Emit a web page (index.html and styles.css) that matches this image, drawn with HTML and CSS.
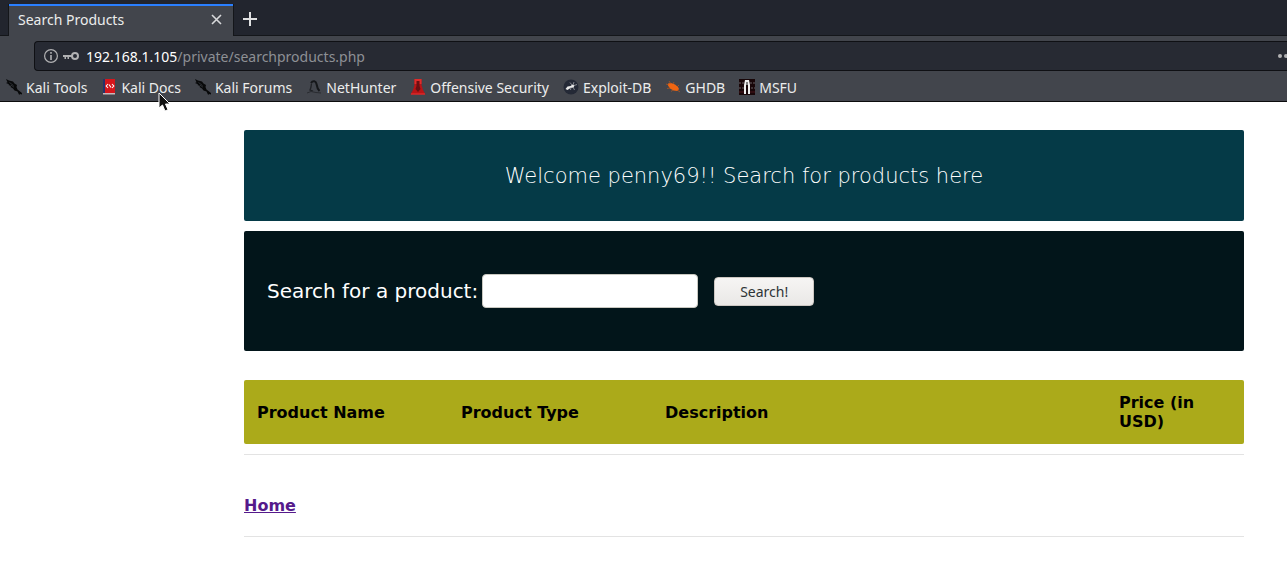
FILE: index.html
```html
<!DOCTYPE html>
<html lang="en">
<head>
<meta charset="utf-8">
<title>Search Products</title>
<link rel="stylesheet" href="styles.css">
</head>
<body>
<svg class="sprite" aria-hidden="true">
  <symbol id="dragon" viewBox="0 0 16 16">
    <path d="M0 0l3 1.500 4 1 1.500 2 2.500 1.500-.5 2 1 2.500 4.500 3.500v1.500l-2-.5-.8 1-1.700-3.500-3-1-1.500-2-2.500-1.500.5-1-2.500-1 .5-.8L0 4l1.500-.8z" fill="#08090a"/>
    <path d="M3.500 3.500l4 3M5 6.200l3 2" stroke="#3a3d43" stroke-width=".7"/>
  </symbol>
</svg>
<header class="browser">
  <div class="tabs">
    <div class="tab">
      <span>Search Products</span>
      <button class="icon-button" aria-label="Close tab"><svg width="11" height="11" viewBox="0 0 11 11"><path d="M1 1l9 9M10 1l-9 9" stroke="#d8d9db" stroke-width="1.600"/></svg></button>
    </div>
    <button class="icon-button new-tab" aria-label="New tab"><svg width="14" height="14" viewBox="0 0 14 14"><path d="M7 0v14M0 7h14" stroke="#e0e1e2" stroke-width="2"/></svg></button>
  </div>
  <div class="toolbar">
    <div class="address">
      <svg width="14" height="14" viewBox="0 0 14 14"><circle cx="7" cy="7" r="6.400" fill="none" stroke="#b1b1b3" stroke-width="1.200"/><path d="M6.200 3h1.600v1.700H6.200zM6.200 6h1.600v5H6.200z" fill="#b1b1b3"/></svg>
      <svg width="16" height="10" viewBox="0 0 16 10"><circle cx="12" cy="5" r="3" fill="none" stroke="#b1b1b3" stroke-width="2"/><path d="M0 4h9v2H6v2H4.500V6H3v2H1.500V6H0z" fill="#b1b1b3"/></svg>
      <div class="url"><b>192.168.1.105</b>/private/searchproducts.php</div>
      <svg class="more" width="10" height="4" viewBox="0 0 10 4"><circle cx="2" cy="2" r="2" fill="#b1b1b3"/><circle cx="8" cy="2" r="2" fill="#b1b1b3"/></svg>
    </div>
  </div>
  <nav class="bookmarks">
    <a href="#"><svg width="16" height="16"><use href="#dragon"/></svg>Kali Tools</a>
    <a href="#"><svg width="16" height="16" viewBox="0 0 16 16"><path d="M2 0h2v14H2z" fill="#26336b"/><path d="M4 0h10v14H4z" fill="#d5161c"/><path d="M2 14h12v1.500H2z" fill="#c8b8bb"/><path d="M7 5L5.200 7 7 9M11 5l1.800 2L11 9M8 5.500l2 3" fill="none" stroke="#fff" stroke-width="1.100"/></svg>Kali Docs</a>
    <a href="#"><svg width="16" height="16"><use href="#dragon"/></svg>Kali Forums</a>
    <a href="#"><svg width="16" height="16" viewBox="0 0 16 16"><path d="M5 4C7 1 10 2 10.500 5c.5 3 1 5 3 7" fill="none" stroke="#15171a" stroke-width="2"/><path d="M5.500 4.500L5 8l-1 3 3 1" fill="none" stroke="#202226" stroke-width="1.300"/><path d="M1 14l4-1.500 5 1 5 .5" fill="none" stroke="#292b30"/></svg>NetHunter</a>
    <a href="#"><svg width="16" height="16" viewBox="0 0 16 16"><path d="M4.500 0h7v6l1.500 5 2.500 4.500H.5L3 11l1.500-5z" fill="#b91416"/><path d="M4.500 0h7v5h-7z" fill="#e02b2a"/><path d="M6.500 2h3v5l1 3-2.500 3-2.500-3 1-3z" fill="#691013"/><path d="M1 15h14" stroke="#ec3030"/></svg>Offensive Security</a>
    <a href="#"><svg width="16" height="16" viewBox="0 0 16 16"><circle cx="8" cy="8" r="7.500" fill="#242936"/><path d="M2.500 10l2-2.500 3-.5 2-1.500 2 1-1 2-3 .5-3 2z" fill="#e8e8e8"/><path d="M9 6L7 3.500M10 6l1-3M11 6.500l3-1M10 8l1.500 3M8 8l-.5 3" fill="none" stroke="#a9abb0" stroke-width=".7"/></svg>Exploit-DB</a>
    <a href="#"><svg width="16" height="16" viewBox="0 0 16 16"><path d="M3 4.500l3-.5 4 1.500 3 2.500 1 2-1.500 2-4-.5-3.500-2-2-3z" fill="#ef6511"/><path d="M4 6L1 5M6 5L4 2M8 5l1-2M5 9l-3 .5M8 11l-2 1.500M12 8l2-2M12 11l3 2" stroke="#b9581f" stroke-width=".7"/></svg>GHDB</a>
    <a href="#"><svg width="16" height="16" viewBox="0 0 16 16"><path d="M0 0h16v16H0z" fill="#180608"/><path d="M0 4h5M11 4h5M0 9h5M12 9h4" stroke="#696064" stroke-dasharray="2 1"/><path d="M6 1h4l1 5v9H9V6H7v9H5V6z" fill="#eee"/><path d="M7.500 3h1v4h-1z" fill="#151515"/><path d="M0 13h5M11 13h5" stroke="#49151a"/></svg>MSFU</a>
  </nav>
  <svg class="pointer" width="14" height="20" viewBox="0 0 14 20" aria-hidden="true"><path d="M1 1v15l3.500-3 2.500 6 3-1.300L7.500 12H12z" fill="#111" stroke="#fff"/></svg>
</header>
<main class="page">
  <h1 class="banner">Welcome penny69!! Search for products here</h1>
  <form class="search">
    <label for="product">Search for a product:</label>
    <input id="product" type="text">
    <button type="submit">Search!</button>
  </form>
  <table class="products">
    <colgroup><col class="name"><col class="type"><col><col class="price"></colgroup>
    <thead><tr><th>Product Name</th><th>Product Type</th><th>Description</th><th>Price (in USD)</th></tr></thead>
  </table>
  <div class="home"><a href="#">Home</a></div>
</main>
</body>
</html>
```
FILE: styles.css
```css
* { box-sizing: border-box; }
body {
  margin: 0;
  background: #fff;
  font-family: "DejaVu Sans", sans-serif;
  font-size: 16px;
  overflow-x: hidden;
}
.sprite { position: absolute; width: 0; height: 0; }
.browser {
  position: relative;
  background: #42454c;
  border-bottom: 1px solid #0c0c0d;
  color: #eceded;
  font-family: "Noto Sans", sans-serif;
  font-size: 14px;
}
.icon-button { display: flex; padding: 0; border: 0; background: none; }
.tabs {
  display: flex;
  align-items: flex-end;
  height: 36px;
  padding-left: 8px;
  background: #22252e;
  box-shadow: inset 0 -1px #14161a;
}
.tab {
  display: flex;
  align-items: center;
  justify-content: space-between;
  width: 226px;
  height: 32px;
  padding: 0 11px 2px 9px;
  background: #42454c;
  border: solid #14161a;
  border-width: 0 1px;
  box-shadow: inset 0 2px #2a7fff;
}
.new-tab { align-self: center; margin: 2px 0 0 9px; }
.toolbar { padding: 5px 0 0 34px; }
.address {
  display: flex;
  align-items: center;
  gap: 5px;
  height: 30px;
  padding-left: 9px;
  background: #272a33;
  border: 1px solid #0f1014;
  border-right: 0;
  border-radius: 4px 0 0 4px;
}
.url { flex: 1; margin-left: 2px; color: #8e9095; }
.url b { color: #fff; font-weight: 400; }
.more { margin-right: -1px; }
.bookmarks {
  display: flex;
  gap: 14px;
  align-items: center;
  height: 30px;
  padding: 2px 6px 0;
}
.bookmarks a {
  display: flex;
  align-items: center;
  gap: 4px;
  color: inherit;
  text-decoration: none;
  white-space: nowrap;
}
.pointer { position: absolute; left: 158px; top: 92px; }
.page { padding: 28px 43px 24px 244px; }
.banner, .search, .products { border-radius: 2px; }
.banner {
  margin: 0 0 10px;
  padding: 33px 20px 31px;
  background: #053a47;
  color: #fff;
  font-size: 21px;
  font-weight: 200;
  line-height: 27px;
  text-align: center;
}
.search {
  display: flex;
  align-items: center;
  margin-bottom: 29px;
  padding: 43px 23px;
  background: #02151a;
  color: #fff;
  font-size: 20px;
}
.search input {
  width: 216px;
  height: 34px;
  margin: 0 16px 0 4px;
  padding: 4px 8px;
  border: 1px solid #c9c8c0;
  border-radius: 4px;
  background: #fff;
  font-size: 16px;
}
.search button {
  width: 100px;
  height: 29px;
  margin-top: 1px;
  padding: 0;
  border: 1px solid #cdc7c2;
  border-radius: 4px;
  background: linear-gradient(#f6f5f4, #eae8e6);
  color: #2e3436;
  font: 14px "Noto Sans", sans-serif;
}
.products {
  width: 100%;
  table-layout: fixed;
  border-spacing: 0;
  background: #abaa1a;
}
.name, .type { width: 204px; }
.price { width: 138px; }
.products th {
  padding: 13px;
  color: #000;
  line-height: 19px;
  text-align: left;
}
.home {
  margin-top: 10px;
  padding: 41px 0 20px;
  border: solid #e3e3e3;
  border-width: 1px 0;
  font-weight: 700;
  line-height: 20px;
}
.home a { color: #551a8b; }
```
